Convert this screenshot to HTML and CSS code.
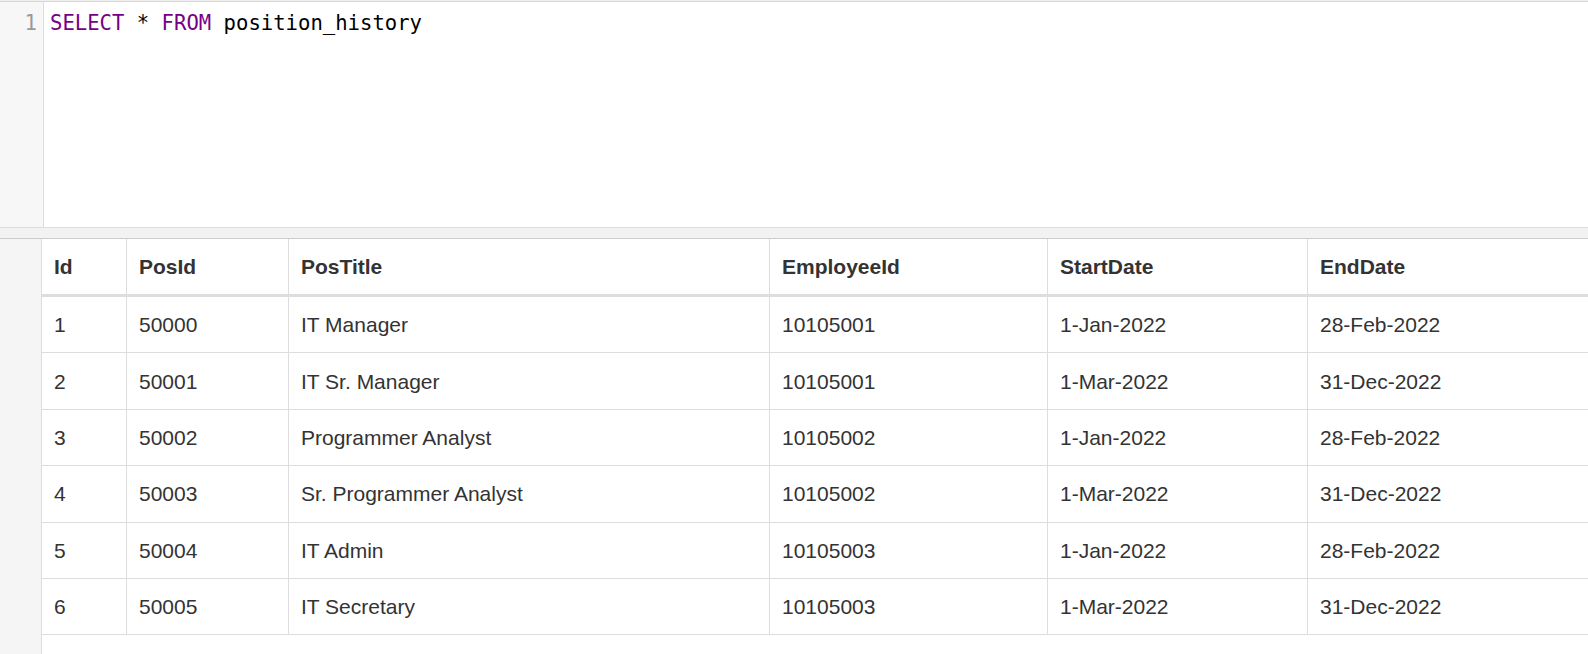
FILE: index.html
```html
<!DOCTYPE html>
<html>
<head>
<meta charset="utf-8">
<link rel="stylesheet" href="styles.css">
</head>
<body>
<div class="page">
  <div class="editor">
    <div class="gutter"><div class="lineno">1</div></div>
    <div class="code"><span class="kw">SELECT</span> * <span class="kw">FROM</span> position_history</div>
  </div>
  <div class="splitter"></div>
  <div class="results">
    <div class="rgutter"></div>
    <div class="grid">
      <div class="cell th">Id</div><div class="cell th">PosId</div><div class="cell th">PosTitle</div><div class="cell th">EmployeeId</div><div class="cell th">StartDate</div><div class="cell th">EndDate</div>
      <div class="cell">1</div><div class="cell">50000</div><div class="cell">IT Manager</div><div class="cell">10105001</div><div class="cell">1-Jan-2022</div><div class="cell">28-Feb-2022</div>
      <div class="cell">2</div><div class="cell">50001</div><div class="cell">IT Sr. Manager</div><div class="cell">10105001</div><div class="cell">1-Mar-2022</div><div class="cell">31-Dec-2022</div>
      <div class="cell">3</div><div class="cell">50002</div><div class="cell">Programmer Analyst</div><div class="cell">10105002</div><div class="cell">1-Jan-2022</div><div class="cell">28-Feb-2022</div>
      <div class="cell">4</div><div class="cell">50003</div><div class="cell">Sr. Programmer Analyst</div><div class="cell">10105002</div><div class="cell">1-Mar-2022</div><div class="cell">31-Dec-2022</div>
      <div class="cell">5</div><div class="cell">50004</div><div class="cell">IT Admin</div><div class="cell">10105003</div><div class="cell">1-Jan-2022</div><div class="cell">28-Feb-2022</div>
      <div class="cell">6</div><div class="cell">50005</div><div class="cell">IT Secretary</div><div class="cell">10105003</div><div class="cell">1-Mar-2022</div><div class="cell">31-Dec-2022</div>
    </div>
  </div>
</div>
</body>
</html>
```

FILE: styles.css
```css
html, body {
  margin: 0;
  padding: 0;
  background: #ffffff;
  overflow: hidden;
}
.page {
  width: 1588px;
  height: 654px;
  overflow: hidden;
  border-top: 1px solid #efefef;
  box-sizing: border-box;
}
.editor {
  display: flex;
  height: 227px;
  border-top: 1px solid #d6d6d6;
  border-bottom: 1px solid #dcdcdc;
  box-sizing: border-box;
  background: #ffffff;
}
.gutter {
  width: 43px;
  flex: 0 0 43px;
  background: #f7f7f7;
  border-right: 1px solid #dddddd;
}
.lineno {
  font-family: "DejaVu Sans Mono", "Liberation Mono", monospace;
  font-size: 20.6px;
  line-height: 28px;
  color: #999999;
  text-align: right;
  padding: 7px 6px 0 0;
}
.code {
  font-family: "DejaVu Sans Mono", "Liberation Mono", monospace;
  font-size: 20.6px;
  line-height: 28px;
  color: #000000;
  padding: 7px 0 0 6px;
  white-space: pre;
}
.kw {
  color: #770088;
}
.splitter {
  height: 11px;
  background: #f2f2f2;
  border-bottom: 1px solid #cccccc;
  box-sizing: border-box;
}
.results {
  display: flex;
  height: 416px;
}
.rgutter {
  flex: 0 0 41px;
  width: 41px;
  background: #f5f5f5;
  border-right: 1px solid #dddddd;
}
.grid {
  display: grid;
  grid-template-columns: 85px 162px 481px 278px 260px 300px;
  grid-template-rows: 58px repeat(6, 56.4px);
  align-content: start;
  flex: 0 0 auto;
}
.cell {
  box-sizing: border-box;
  border-right: 1px solid #dddddd;
  border-bottom: 1px solid #dddddd;
  display: flex;
  align-items: center;
  padding-left: 12px;
  padding-top: 1px;
  font-family: "Liberation Sans", Arial, sans-serif;
  font-size: 21px;
  color: #333333;
  white-space: nowrap;
}
.th {
  font-weight: bold;
  border-bottom: 3px solid #dddddd;
}
```
